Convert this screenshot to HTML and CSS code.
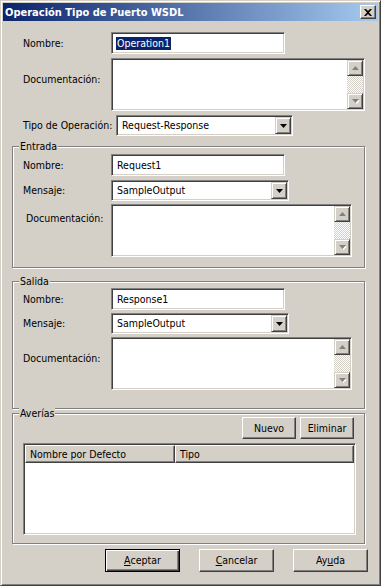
FILE: index.html
```html
<!DOCTYPE html>
<html lang="es">
<head>
    <meta charset="UTF-8">
    <meta name="viewport" content="width=device-width, initial-scale=1.0">
    <title>Operación Tipo de Puerto WSDL</title>
    <link rel="stylesheet" href="styles.css">
</head>
<body>

<div class="window">
    <div class="titlebar">
        <span class="title">Operación Tipo de Puerto WSDL</span>
        <span class="close push">
            <svg width="8" height="7" viewBox="0 0 8 7"><path d="M0 0h2l2 2 2-2h2L5 3.5 8 7H6L4 5 2 7H0l3-3.5z" fill="#000"/></svg>
        </span>
    </div>

    <div class="dialog">
        <div class="row row-name">
            <span class="lbl">Nombre:</span>
            <div class="edit sunken w-name"><span class="selected">Operation1</span></div>
        </div>
        <div class="row row-memo">
            <span class="lbl lbl-memo">Documentación:</span>
            <div class="memo sunken w-memo">
                <div class="memo-text"></div>
                <div class="vscroll">
                    <span class="sb-btn bevel"><svg width="7" height="5" viewBox="0 0 7 5"><path d="M4 1l3 3H1z" fill="#fff"/><path d="M3.5 0L7 4H0z" fill="#808080"/></svg></span>
                    <span class="sb-track"></span>
                    <span class="sb-btn bevel"><svg width="7" height="5" viewBox="0 0 7 5"><path d="M1 1h7L4.5 5z" fill="#fff"/><path d="M0 0h7L3.5 4z" fill="#808080"/></svg></span>
                </div>
            </div>
        </div>
        <div class="row row-type">
            <span class="lbl">Tipo de Operación:</span>
            <div class="combo sunken w-type">
                <span class="combo-text">Request-Response</span>
                <span class="combo-btn bevel"><svg width="7" height="4" viewBox="0 0 7 4"><path d="M0 0h7L3.5 4z" fill="#000"/></svg></span>
            </div>
        </div>

        <div class="group group-in">
            <div class="group-title">Entrada</div>
            <div class="row row-g-name">
                <span class="lbl">Nombre:</span>
                <div class="edit sunken w-name">Request1</div>
            </div>
            <div class="row row-g-combo">
                <span class="lbl">Mensaje:</span>
                <div class="combo sunken w-combo">
                    <span class="combo-text">SampleOutput</span>
                    <span class="combo-btn bevel"><svg width="7" height="4" viewBox="0 0 7 4"><path d="M0 0h7L3.5 4z" fill="#000"/></svg></span>
                </div>
            </div>
            <div class="row row-g-memo">
                <span class="lbl lbl-memo lbl-memo-in">Documentación:</span>
                <div class="memo sunken w-memo-sm">
                    <div class="memo-text"></div>
                    <div class="vscroll">
                        <span class="sb-btn bevel"><svg width="7" height="5" viewBox="0 0 7 5"><path d="M4 1l3 3H1z" fill="#fff"/><path d="M3.5 0L7 4H0z" fill="#808080"/></svg></span>
                        <span class="sb-track"></span>
                        <span class="sb-btn bevel"><svg width="7" height="5" viewBox="0 0 7 5"><path d="M1 1h7L4.5 5z" fill="#fff"/><path d="M0 0h7L3.5 4z" fill="#808080"/></svg></span>
                    </div>
                </div>
            </div>
        </div>

        <div class="group group-out">
            <div class="group-title">Salida</div>
            <div class="row row-g-name">
                <span class="lbl">Nombre:</span>
                <div class="edit sunken w-name">Response1</div>
            </div>
            <div class="row row-g-combo">
                <span class="lbl">Mensaje:</span>
                <div class="combo sunken w-combo">
                    <span class="combo-text">SampleOutput</span>
                    <span class="combo-btn bevel"><svg width="7" height="4" viewBox="0 0 7 4"><path d="M0 0h7L3.5 4z" fill="#000"/></svg></span>
                </div>
            </div>
            <div class="row row-g-memo">
                <span class="lbl lbl-memo">Documentación:</span>
                <div class="memo sunken w-memo-sm">
                    <div class="memo-text"></div>
                    <div class="vscroll">
                        <span class="sb-btn bevel"><svg width="7" height="5" viewBox="0 0 7 5"><path d="M4 1l3 3H1z" fill="#fff"/><path d="M3.5 0L7 4H0z" fill="#808080"/></svg></span>
                        <span class="sb-track"></span>
                        <span class="sb-btn bevel"><svg width="7" height="5" viewBox="0 0 7 5"><path d="M1 1h7L4.5 5z" fill="#fff"/><path d="M0 0h7L3.5 4z" fill="#808080"/></svg></span>
                    </div>
                </div>
            </div>
        </div>

        <div class="group group-faults">
            <div class="group-title">Averías</div>
            <div class="fault-actions">
                <span class="push btn-small">Nuevo</span>
                <span class="push btn-small">Eliminar</span>
            </div>
            <div class="list sunken">
                <div class="list-head">
                    <span class="col-head push col-name">Nombre por Defecto</span>
                    <span class="col-head push col-type">Tipo</span>
                </div>
            </div>
        </div>

        <div class="footer">
            <span class="push btn default"><u>A</u>ceptar</span>
            <span class="push btn"><u>C</u>ancelar</span>
            <span class="push btn">Ay<u>u</u>da</span>
        </div>
    </div>
</div>

</body>
</html>
```

FILE: styles.css
```css
* {
    box-sizing: border-box;
}

body {
    margin: 0;
    background-color: #d4d0c8;
    font-family: "DejaVu Sans Condensed", "Liberation Sans", Arial, sans-serif;
    font-size: 10.5px;
    line-height: 13px;
    color: #000;
    white-space: nowrap;
}

/* window frame */

.window {
    width: 381px;
    height: 586px;
    padding: 2px;
    border: 1px solid;
    border-color: #d4d0c8 #404040 #404040 #d4d0c8;
    box-shadow: inset 1px 1px #fff, inset -1px -1px #808080;
    background-color: #d4d0c8;
}

.titlebar {
    display: flex;
    align-items: center;
    justify-content: space-between;
    height: 18px;
    padding: 0 2px 0 2px;
    background: linear-gradient(to right, #0a246a, #a6caf0);
    color: #fff;
    font-size: 11px;
    font-weight: bold;
}

.close {
    width: 16px;
    height: 14px;
    display: flex;
    align-items: center;
    justify-content: center;
}

/* 3d edges */

.push {
    border: 1px solid;
    border-color: #fff #404040 #404040 #fff;
    box-shadow: inset -1px -1px #808080;
    background-color: #d4d0c8;
}

.bevel {
    border: 1px solid;
    border-color: #d4d0c8 #404040 #404040 #d4d0c8;
    box-shadow: inset 1px 1px #fff, inset -1px -1px #808080;
    background-color: #d4d0c8;
}

.sunken {
    border: 1px solid;
    border-color: #808080 #fff #fff #808080;
    box-shadow: inset 1px 1px #404040, inset -1px -1px #d4d0c8;
    background-color: #fff;
    padding: 1px;
}

/* form rows */

.dialog {
    padding-left: 9px;
}

.row {
    display: grid;
    grid-template-columns: 88px max-content;
    align-items: center;
    padding-left: 11px;
}

.group .row {
    padding-left: 10px;
}

.row-name { margin-top: 11px; }
.row-memo { margin-top: 4px; }
.row-type {
    margin-top: 4px;
    grid-template-columns: 93px max-content;
}

.lbl-memo {
    align-self: start;
    margin-top: 15px;
}

.lbl-memo-in {
    margin-top: 8px;
    padding-left: 3px;
}

.edit {
    display: flex;
    align-items: center;
    height: 22px;
    padding-left: 5px;
}

.selected {
    margin-left: -1px;
    padding: 0 1px;
    background-color: #0a246a;
    color: #fff;
}

.combo {
    display: flex;
    align-items: center;
    height: 21px;
}

.combo-text {
    flex: 1;
    padding-left: 4px;
}

.combo-btn {
    width: 16px;
    height: 17px;
    display: flex;
    align-items: center;
    justify-content: center;
}

.memo {
    display: flex;
    height: 53px;
}

.memo-text {
    flex: 1;
}

.vscroll {
    width: 16px;
    display: flex;
    flex-direction: column;
}

.sb-btn {
    height: 16px;
    display: flex;
    align-items: center;
    justify-content: center;
}

.sb-track {
    flex: 1;
    background: repeating-conic-gradient(#d4d0c8 0 25%, #fff 0 50%) 0 0 / 2px 2px;
}

.w-name { width: 174px; }
.w-memo { width: 254px; }
.w-type { width: 177px; }
.w-combo { width: 178px; }
.w-memo-sm { width: 241px; }

/* group boxes */

.group {
    width: 353px;
    border: 1px solid #808080;
    box-shadow: 1px 1px #fff, inset 1px 1px #fff;
}

.group-title {
    display: table;
    margin: -7px 0 -6px 6px;
    padding: 0 1px;
    background-color: #d4d0c8;
}

.group-in { margin-top: 10px; padding-bottom: 10px; }
.group-in .row-g-name { margin-top: 7px; }
.group-in .row-g-combo { margin-top: 4px; }
.group-in .row-g-memo { margin-top: 3px; }

.group-out { margin-top: 13px; padding-bottom: 18px; }
.group-out .row-g-name { margin-top: 6px; }
.group-out .row-g-combo { margin-top: 3px; }
.group-out .row-g-memo { margin-top: 3px; }

.group-faults { margin-top: 4px; padding-bottom: 8px; }

.fault-actions {
    display: flex;
    justify-content: flex-end;
    gap: 4px;
    margin-top: 3px;
    padding-right: 10px;
}

.btn-small {
    width: 54px;
    height: 22px;
    display: flex;
    align-items: center;
    justify-content: center;
}

.list {
    width: 333px;
    height: 92px;
    margin: 4px 0 0 10px;
}

.list-head {
    display: flex;
    height: 18px;
}

.col-head {
    display: flex;
    align-items: center;
    padding-left: 4px;
}

.col-name { width: 150px; }
.col-type { flex: 1; }

/* dialog buttons */

.footer {
    display: flex;
    gap: 19px;
    margin-top: 5px;
    padding-left: 93px;
}

.btn {
    width: 75px;
    height: 23px;
    display: flex;
    align-items: center;
    justify-content: center;
}

.btn u {
    text-decoration-thickness: 1px;
    text-underline-offset: 1px;
}

.default {
    border-color: #000;
    box-shadow: inset 1px 1px #fff, inset -1px -1px #404040, inset -2px -2px #808080;
}
```
